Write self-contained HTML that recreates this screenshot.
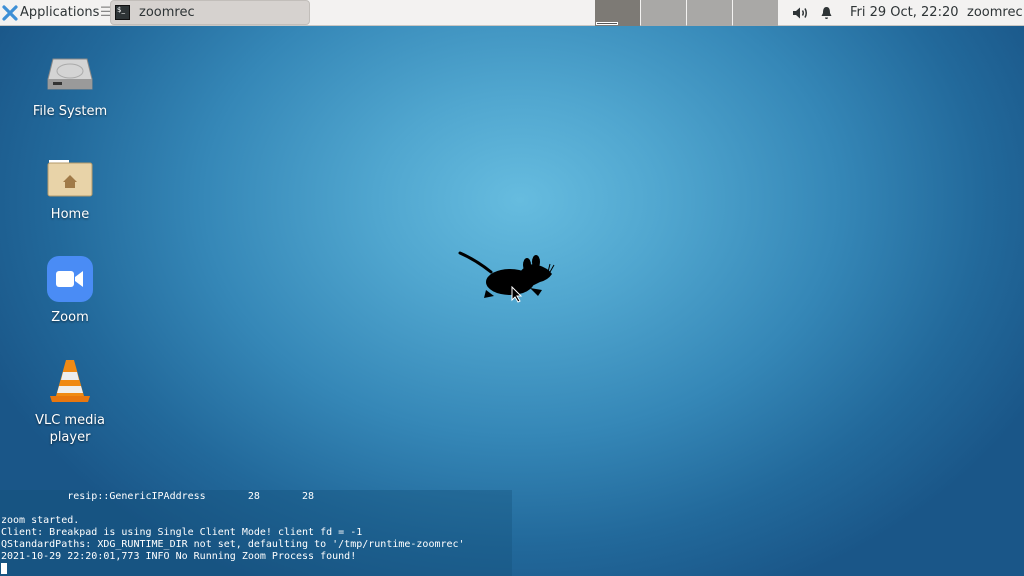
<!DOCTYPE html>
<html><head><meta charset="utf-8"><style>
*{margin:0;padding:0;box-sizing:border-box}
body{width:1024px;height:576px;overflow:hidden;position:relative;font-family:"DejaVu Sans","Liberation Sans",sans-serif;
background:radial-gradient(ellipse 580px 430px at 520px 200px,#66bcdf 0%,#50a6cf 25%,#3587b7 55%,#22699b 80%,#1a5688 100%);}
#panel{position:absolute;left:0;top:0;width:1024px;height:26px;background:#f3f2f1;border-bottom:1px solid #c9c7c4;font-size:13px;color:#2e3436}
.t{position:absolute;top:5px;white-space:nowrap}
#task{position:absolute;left:110px;top:0;width:200px;height:25px;background:#d6d2cf;border:1px solid #c2beba;border-radius:4px}
.ws{position:absolute;top:0;height:26px;width:45px;background:#a9a8a6}
.desk{position:absolute;width:100px;text-align:center;color:#fff;font-size:13px;text-shadow:0 1px 2px rgba(0,0,0,.6);line-height:17px}
#term{position:absolute;left:0;top:490px;width:512px;height:86px;background:rgba(20,80,120,.35);font-family:"DejaVu Sans Mono","Liberation Mono",monospace;font-size:10px;color:#fff;line-height:12px;padding-left:1px;padding-top:1px;white-space:pre}
</style></head><body>
<div id="panel">
<svg style="position:absolute;left:2px;top:5px" width="16" height="16" viewBox="0 0 16 16"><path d="M2 2 L14 14 M14 2 L2 14" stroke="#3d8fd6" stroke-width="3.2" stroke-linecap="round"/></svg>
<span class="t" style="left:20px">Applications</span><span class="t" style="left:100px;color:#888">☰</span>
<div id="task"><div style="position:absolute;left:4px;top:4px;width:15px;height:15px;background:#2e3436;border:1px solid #111;color:#fff;font-size:7px;line-height:8px;padding-left:1px">$_</div><span class="t" style="left:28px;top:4px">zoomrec</span></div>
<div class="ws" style="left:595px;background:#7d7a75"><div style="position:absolute;left:1px;bottom:1px;width:22px;height:3px;border:1px solid #fff;background:#555"></div></div>
<div class="ws" style="left:641px"></div><div class="ws" style="left:687px"></div><div class="ws" style="left:733px"></div>
<svg style="position:absolute;left:792px;top:6px" width="18" height="14" viewBox="0 0 18 14"><path d="M1 5 H4 L8 1.5 V12.5 L4 9 H1Z" fill="#2e3436"/><path d="M10.5 4.5 Q12 7 10.5 9.5 M13 2.5 Q15.5 7 13 11.5" stroke="#2e3436" stroke-width="1.5" fill="none"/></svg>
<svg style="position:absolute;left:820px;top:6px" width="13" height="14" viewBox="0 0 13 14"><path d="M6.5 1 C3.5 1 3 4 3 7 L1.5 10 L11.5 10 L10 7 C10 4 9.5 1 6.5 1Z M5 11.5 h3 a1.5 1.5 0 0 1 -3 0Z" fill="#2e3436"/></svg>
<span class="t" style="left:850px">Fri 29 Oct, 22:20</span><span class="t" style="left:967px">zoomrec</span>
</div>

<svg style="position:absolute;left:47px;top:57px" width="46" height="36" viewBox="0 0 46 36"><path d="M6 2 H40 L45 22 V32 H1 V22Z" fill="#d4d4d4" stroke="#888"/><ellipse cx="23" cy="14" rx="13" ry="7" fill="none" stroke="#aaa"/><rect x="1" y="22" width="44" height="10" fill="#9a9a9a"/><rect x="6" y="25" width="9" height="3" fill="#333"/></svg>
<div class="desk" style="left:20px;top:103px">File System</div>

<svg style="position:absolute;left:47px;top:158px" width="46" height="40" viewBox="0 0 46 40"><rect x="2" y="2" width="20" height="6" fill="#fff"/><rect x="1" y="5" width="44" height="33" rx="2" fill="#e8d3a8" stroke="#b39a6a"/><path d="M23 17 L16 24 H18 V30 H28 V24 H30Z" fill="#a07a48"/></svg>
<div class="desk" style="left:20px;top:206px">Home</div>

<div style="position:absolute;left:47px;top:256px;width:46px;height:46px;border-radius:12px;background:#4a8cf5"></div>
<svg style="position:absolute;left:56px;top:270px" width="28" height="18" viewBox="0 0 28 18"><rect x="0" y="1" width="18" height="16" rx="3" fill="#fff"/><path d="M19 7 L27 1 V17 L19 11Z" fill="#fff"/></svg>
<div class="desk" style="left:20px;top:309px">Zoom</div>

<svg style="position:absolute;left:48px;top:358px" width="44" height="46" viewBox="0 0 44 46"><path d="M2 38 H42 L40 44 H4Z" fill="#e8770f"/><path d="M18 2 H26 L36 38 H8Z" fill="#f08a14"/><path d="M15 14 H29 L31 22 H13Z M11 28 H33 L35 35 H9Z" fill="#eee"/></svg>
<div class="desk" style="left:20px;top:412px">VLC media<br>player</div>

<svg style="position:absolute;left:458px;top:250px" width="100" height="55" viewBox="0 0 100 55">
<path d="M2 3 Q18 10 33 22" stroke="#000" stroke-width="3" fill="none" stroke-linecap="round"/>
<ellipse cx="52" cy="32" rx="24" ry="13" fill="#000"/>
<path d="M62 22 Q70 12 80 15 Q90 18 94 24 Q90 30 82 32 L70 38Z" fill="#000"/>
<ellipse cx="69" cy="15" rx="4" ry="7" fill="#000"/><ellipse cx="78" cy="12" rx="4" ry="7" fill="#000"/>
<path d="M28 40 L26 48 L36 46Z M72 38 L80 46 L84 40Z" fill="#000"/>
<path d="M90 22 L92 14 M92 22 L96 15" stroke="#000" stroke-width="1"/>
</svg>
<svg style="position:absolute;left:511px;top:286px" width="12" height="17" viewBox="0 0 12 17"><path d="M1 1 V14 L4 11 L7 16 L9 15 L6 10 H10Z" fill="#000" stroke="#fff" stroke-width="1"/></svg>

<div id="term">           resip::GenericIPAddress       28       28

zoom started.
Client: Breakpad is using Single Client Mode! client fd = -1
QStandardPaths: XDG_RUNTIME_DIR not set, defaulting to '/tmp/runtime-zoomrec'
2021-10-29 22:20:01,773 INFO No Running Zoom Process found!
<span style="background:#fff"> </span></div>
</body></html>
